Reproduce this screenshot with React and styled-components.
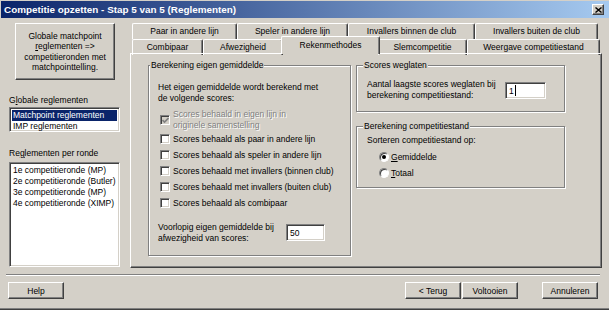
import React from 'react'
import styled, { createGlobalStyle } from 'styled-components'

const GlobalStyle = createGlobalStyle`
  html, body {
    margin: 0;
    padding: 0;
    background: #d4d0c8;
  }
  body {
    font-family: "Liberation Sans", Arial, sans-serif;
    font-size: 8.5px;
    color: #000;
  }
`;

const Window = styled.div`
  width: 609px;
  height: 310px;
  box-sizing: border-box;
  padding: 1px 0 0 1px;
  background: #d4d0c8;
  border-bottom: 1px solid #404040;
  box-shadow: inset 0 -1px 0 #808080;
  display: flex;
  flex-direction: column;
  overflow: hidden;
`;

const TitleBar = styled.div`
  height: 17px;
  flex-shrink: 0;
  display: flex;
  align-items: center;
  padding-left: 3px;
  background: linear-gradient(to right, #0a246a, #a6caf0);
  color: #fff;
  font-weight: bold;
  font-size: 9.9px;
  white-space: nowrap;
`;

const CloseButton = styled.div`
  margin-left: auto;
  margin-right: 5px;
  width: 12px;
  height: 11px;
  box-sizing: border-box;
  background: #d4d0c8;
  border: 1px solid;
  border-color: #fff #404040 #404040 #fff;
  box-shadow: inset -1px -1px 0 #808080;
  display: flex;
  align-items: center;
  justify-content: center;
`;

const Main = styled.div`
  height: 250px;
  flex-shrink: 0;
  display: flex;
`;

const LeftColumn = styled.div`
  width: 111px;
  margin-left: 8px;
  padding-top: 5px;
  display: flex;
  flex-direction: column;
`;

const raised = `
  box-sizing: border-box;
  background: #d4d0c8;
  border: 1px solid;
  border-color: #fff #404040 #404040 #fff;
  box-shadow: inset -1px -1px 0 #808080;
`;

const sunken = `
  box-sizing: border-box;
  background: #fff;
  border: 1px solid;
  border-color: #808080 #fff #fff #808080;
  box-shadow: inset 1px 1px 0 #404040, inset -1px -1px 0 #d4d0c8;
`;

const BigButton = styled.div`
  ${raised}
  margin-left: 6px;
  width: 100px;
  height: 57px;
  display: flex;
  align-items: center;
  justify-content: center;
`;

const ButtonCaption = styled.span`
  text-align: center;
  line-height: 10.5px;
  white-space: nowrap;
`;

const FieldLabel = styled.div`
  margin-top: ${p => p.$top}px;
  height: 10px;
  line-height: 10px;
`;

const ListBox = styled.div`
  ${sunken}
  margin-top: ${p => p.$top}px;
  height: ${p => p.$h}px;
  padding: 2px;
`;

const ListItem = styled.div`
  height: 11px;
  line-height: 11px;
  padding-left: 1px;
  white-space: nowrap;
  background: ${p => (p.$selected ? '#0a246a' : 'transparent')};
  color: ${p => (p.$selected ? '#fff' : '#000')};
`;

const TabControl = styled.div`
  width: 472px;
  margin: 5px 0 0 10px;
  display: flex;
  flex-direction: column;
`;

const TabRow = styled.div`
  height: ${p => p.$h}px;
  padding-left: 2px;
  display: flex;
  align-items: flex-start;
`;

const Tab = styled.div`
  box-sizing: border-box;
  width: ${p => (p.$active ? p.$w + 4 : p.$w)}px;
  height: ${p => (p.$active ? 18 : 16)}px;
  margin: ${p => (p.$active ? '-3px -2px 0' : '0')};
  position: ${p => (p.$active ? 'relative' : 'static')};
  z-index: ${p => (p.$active ? 1 : 'auto')};
  padding-bottom: ${p => (p.$active ? 2 : 1)}px;
  background: #d4d0c8;
  border-top: 1px solid #fff;
  border-left: 1px solid #fff;
  border-right: 1px solid #404040;
  border-radius: 2px 2px 0 0;
  box-shadow: inset -1px 0 0 #808080;
  display: flex;
  align-items: center;
  justify-content: center;
  white-space: nowrap;
`;

const TabPanel = styled.div`
  box-sizing: border-box;
  height: 215px;
  border: 1px solid;
  border-color: #fff #404040 #404040 #fff;
  box-shadow: inset -1px -1px 0 #808080;
  padding: 6px 0 0 17px;
  display: flex;
  gap: 5px;
`;

const RightColumn = styled.div`
  display: flex;
  flex-direction: column;
  gap: 9px;
`;

const Group = styled.fieldset`
  box-sizing: border-box;
  margin: 0;
  padding: 0;
  min-width: 0;
  width: ${p => p.$w}px;
  height: ${p => p.$h}px;
  border: 1px solid #808080;
  box-shadow: 1px 1px 0 #fff, inset 1px 1px 0 #fff;
`;

const Legend = styled.legend`
  padding: 0 1px;
  margin-left: ${p => p.$indent}px;
  line-height: 11px;
  background: #d4d0c8;
`;

const GroupBody = styled.div`
  padding: ${p => p.$pad};
`;

const Paragraph = styled.div`
  line-height: 11px;
  white-space: nowrap;
`;

const CheckList = styled.div`
  margin: 5px 0 0 2px;
  display: flex;
  flex-direction: column;
`;

const CheckRow = styled.div`
  min-height: 16px;
  display: flex;
  align-items: center;
  gap: 3px;
  line-height: 11px;
  white-space: nowrap;
  color: ${p => (p.$disabled ? '#808080' : '#000')};
  text-shadow: ${p => (p.$disabled ? '1px 1px 0 #fff' : 'none')};
`;

const CheckBox = styled.span`
  ${sunken}
  width: 10px;
  height: 10px;
  flex-shrink: 0;
  display: flex;
  align-items: center;
  justify-content: center;
  background: ${p => (p.$disabled ? '#d4d0c8' : '#fff')};
`;

const FieldRow = styled.div`
  margin-top: ${p => p.$top}px;
  display: flex;
  align-items: flex-start;
`;

const FieldText = styled.div`
  width: ${p => p.$w}px;
  line-height: 11px;
  white-space: nowrap;
`;

const TextBox = styled.div`
  ${sunken}
  margin-top: ${p => p.$top}px;
  width: ${p => p.$w}px;
  height: 17px;
  padding: 0 3px;
  display: flex;
  align-items: center;
`;

const Caret = styled.span`
  display: inline-block;
  width: 1px;
  height: 11px;
  margin-left: 1px;
  background: #000;
`;

const RadioList = styled.div`
  margin: 3px 0 0 12px;
  display: flex;
  flex-direction: column;
`;

const RadioRow = styled.div`
  height: 16px;
  display: flex;
  align-items: center;
  gap: 2px;
`;

const Radio = styled.span`
  box-sizing: border-box;
  width: 10px;
  height: 10px;
  border-radius: 50%;
  background: #fff;
  border: 1px solid;
  border-color: #808080 #fff #fff #808080;
  box-shadow: inset 1px 1px 0 #404040;
  display: flex;
  align-items: center;
  justify-content: center;
  &::after {
    content: '';
    display: ${p => (p.$checked ? 'block' : 'none')};
    width: 4px;
    height: 4px;
    border-radius: 50%;
    background: #000;
  }
`;

const Separator = styled.div`
  margin: 6px 0 0 5px;
  width: 594px;
  border-top: 1px solid #808080;
  border-bottom: 1px solid #fff;
`;

const ButtonRow = styled.div`
  margin-top: 6px;
  padding: 0 11px 0 7px;
  display: flex;
  align-items: center;
`;

const Button = styled.div`
  ${raised}
  width: 56px;
  height: 17px;
  margin-left: ${p => p.$gap || 0}px;
  display: flex;
  align-items: center;
  justify-content: center;
  white-space: nowrap;
`;

const backTabs = [
  ['Paar in andere lijn', 105],
  ['Speler in andere lijn', 111],
  ['Invallers binnen de club', 127],
  ['Invallers buiten de club', 123],
];

const frontTabs = [
  ['Combipaar', 71],
  ['Afwezigheid', 80],
  ['Rekenmethodes', 95, true],
  ['Slemcompetitie', 89],
  ['Weergave competitiestand', 133],
];

const scoreOptions = [
  'Scores behaald als paar in andere lijn',
  'Scores behaald als speler in andere lijn',
  'Scores behaald met invallers (binnen club)',
  'Scores behaald met invallers (buiten club)',
  'Scores behaald als combipaar',
];

const rounds = [
  '1e competitieronde (MP)',
  '2e competitieronde (Butler)',
  '3e competitieronde (MP)',
  '4e competitieronde (XIMP)',
];

const Check = () => (
  <svg width="7" height="7" viewBox="0 0 7 7">
    <path d="M0.5 3 L2.5 5 L6.5 1" fill="none" stroke="#808080" strokeWidth="1.6" />
  </svg>
);

const App = () => {
  return (
    <>
      <GlobalStyle />
      <Window>
        <TitleBar>
          Competitie opzetten - Stap 5 van 5 (Reglementen)
          <CloseButton>
            <svg width="7" height="6" viewBox="0 0 7 6">
              <path d="M0.5 0.5 L6.5 5.5 M6.5 0.5 L0.5 5.5" stroke="#000" strokeWidth="1.4" />
            </svg>
          </CloseButton>
        </TitleBar>

        <Main>
          <LeftColumn>
            <BigButton>
              <ButtonCaption>
                Globale matchpoint<br />
                <u>r</u>eglementen =&gt;<br />
                competitieronden met<br />
                matchpointtelling.
              </ButtonCaption>
            </BigButton>
            <FieldLabel $top={15}>G<u>l</u>obale reglementen</FieldLabel>
            <ListBox $top={2} $h={25}>
              <ListItem $selected>Matchpoint reglementen</ListItem>
              <ListItem>IMP reglementen</ListItem>
            </ListBox>
            <FieldLabel $top={16}>Re<u>g</u>lementen per ronde</FieldLabel>
            <ListBox $top={4} $h={105}>
              {rounds.map(r => (
                <ListItem key={r}>{r}</ListItem>
              ))}
            </ListBox>
          </LeftColumn>

          <TabControl>
            <TabRow $h={16}>
              {backTabs.map(([label, w]) => (
                <Tab key={label} $w={w}>{label}</Tab>
              ))}
            </TabRow>
            <TabRow $h={14}>
              {frontTabs.map(([label, w, active]) => (
                <Tab key={label} $w={w} $active={active}>{label}</Tab>
              ))}
            </TabRow>
            <TabPanel>
              <Group $w={203} $h={196}>
                <Legend $indent={1}>Berekening eigen gemiddelde</Legend>
                <GroupBody $pad="11px 0 0 9px">
                  <Paragraph>
                    Het eigen gemiddelde wordt berekend met<br />
                    de volgende scores:
                  </Paragraph>
                  <CheckList>
                    <CheckRow $disabled>
                      <CheckBox $disabled><Check /></CheckBox>
                      <span>
                        Scores behaald in eigen lijn in<br />
                        originele samenstelling
                      </span>
                    </CheckRow>
                    {scoreOptions.map(o => (
                      <CheckRow key={o}>
                        <CheckBox />
                        <span>{o}</span>
                      </CheckRow>
                    ))}
                  </CheckList>
                  <FieldRow $top={11}>
                    <FieldText $w={128}>
                      Voorlopig eigen gemiddelde bij<br />
                      afwezigheid van scores:
                    </FieldText>
                    <TextBox $top={2} $w={39}>50</TextBox>
                  </FieldRow>
                </GroupBody>
              </Group>

              <RightColumn>
                <Group $w={209} $h={52}>
                  <Legend $indent={6}>Scores weglaten</Legend>
                  <GroupBody $pad="8px 0 0 10px">
                    <FieldRow $top={0}>
                      <FieldText $w={138}>
                        Aantal laagste scores weglaten bij<br />
                        berekening competitiestand:
                      </FieldText>
                      <TextBox $top={3} $w={41}>1<Caret /></TextBox>
                    </FieldRow>
                  </GroupBody>
                </Group>

                <Group $w={209} $h={67}>
                  <Legend $indent={6}>Berekening competitiestand</Legend>
                  <GroupBody $pad="3px 0 0 10px">
                    <Paragraph>Sorteren competitiestand op:</Paragraph>
                    <RadioList>
                      <RadioRow>
                        <Radio $checked />
                        <span><u>G</u>emiddelde</span>
                      </RadioRow>
                      <RadioRow>
                        <Radio />
                        <span><u>T</u>otaal</span>
                      </RadioRow>
                    </RadioList>
                  </GroupBody>
                </Group>
              </RightColumn>
            </TabPanel>
          </TabControl>
        </Main>

        <Separator />

        <ButtonRow>
          <Button>Help</Button>
          <Button $gap={341}>&lt; Terug</Button>
          <Button $gap={1}>Voltooien</Button>
          <Button $gap={24}>Annuleren</Button>
        </ButtonRow>
      </Window>
    </>
  )
}

export default App
